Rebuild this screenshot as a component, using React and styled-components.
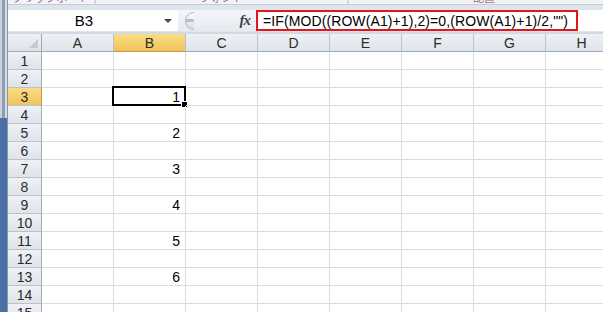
import { Fragment } from "react";
import styled, { createGlobalStyle, css } from "styled-components";

const GlobalStyle = createGlobalStyle`
  html, body {
    margin: 0;
    padding: 0;
    background: #fff;
    overflow: hidden;
  }
  body {
    font-family: "Liberation Sans", "Noto Sans CJK JP", sans-serif;
  }
`;

const Page = styled.div`
  display: flex;
  width: 603px;
  height: 312px;
  overflow: hidden;
`;

const WindowEdge = styled.div`
  width: 8px;
  flex: none;
  box-sizing: border-box;
  border-right: 1px solid #8a97a8;
  background:
    linear-gradient(to right, #c9d0d9 0 2px, #8e9db0 2px 5px, #d5dbe3 5px),
    #c9d0d9;
  background-size: 100% 118px;
  background-repeat: no-repeat;
  background-color: #4a6ea6;
`;

const Main = styled.div`
  flex: 1;
  min-width: 0;
  display: flex;
  flex-direction: column;
  overflow: hidden;
`;

const RibbonStrip = styled.div`
  display: flex;
  height: 5px;
  flex: none;
  overflow: hidden;
  background: #f2f4f7;
  border-bottom: 1px solid #c3ccd7;
  box-sizing: border-box;
`;

const RibbonGroup = styled.div`
  width: ${(p) => p.$w}px;
  flex: none;
  box-sizing: border-box;
  border-right: 2px solid #d3d9e1;
  display: flex;
  justify-content: ${(p) => p.$align || "center"};
  padding: 0 ${(p) => p.$pad || 0}px;
`;

const RibbonLabel = styled.span`
  font-size: 11px;
  line-height: 12px;
  margin-top: -8px;
  color: #9a6a86;
  white-space: nowrap;
`;

const FormulaArea = styled.div`
  flex: none;
  background: #dfe5ed;
  padding: 5px 0 1px;
`;

const FormulaBar = styled.div`
  display: flex;
  align-items: stretch;
  height: 21px;
`;

const NameBox = styled.div`
  width: 170px;
  flex: none;
  background: #fff;
  display: flex;
  align-items: center;
`;

const NameText = styled.span`
  flex: 1;
  text-align: center;
  font-size: 15px;
  color: #000;
`;

const DropArrow = styled.span`
  width: 0;
  height: 0;
  margin: 0 6px 0 4px;
  border-left: 4px solid transparent;
  border-right: 4px solid transparent;
  border-top: 4px solid #444;
`;

const BarTools = styled.div`
  width: 78px;
  flex: none;
  display: flex;
  align-items: center;
  background: linear-gradient(#f3f5f8, #e6eaf0);
`;

const Splitter = styled.svg`
  margin-left: 2px;
  flex: none;
`;

const Fx = styled.span`
  margin-left: auto;
  margin-right: 6px;
  font-family: "Liberation Serif", serif;
  font-style: italic;
  font-weight: bold;
  font-size: 15px;
  color: #444;
  letter-spacing: -1px;
`;

const FormulaInput = styled.div`
  flex: 1;
  background: #fff;
  display: flex;
`;

const Highlight = styled.div`
  width: 322px;
  flex: none;
  box-sizing: border-box;
  border: 2px solid #e4161c;
  display: flex;
  align-items: center;
  padding-left: 5px;
`;

const FormulaText = styled.span`
  font-size: 14px;
  color: #000;
  white-space: nowrap;
  letter-spacing: 0.1px;
`;

const Gap = styled.div`
  height: 2px;
  flex: none;
  background: #d3d9e1;
`;

const Sheet = styled.div`
  display: grid;
  grid-template-columns: 34px repeat(8, 72px);
  grid-auto-rows: 18px;
`;

const headerBase = css`
  box-sizing: border-box;
  display: flex;
  align-items: center;
  justify-content: center;
  font-size: 14px;
  color: #2b2b2b;
  border-right: 1px solid #b9c2cc;
  border-bottom: 1px solid #b9c2cc;
  background: ${(p) =>
    p.$selected
      ? "linear-gradient(#f9dc83, #f1c35e)"
      : "linear-gradient(#eef1f5, #dfe4ea)"};
`;

const Corner = styled.div`
  ${headerBase};
  position: relative;
  border-bottom-color: #9eabb8;
  border-right-color: #9eabb8;
  &::after {
    content: "";
    position: absolute;
    right: 3px;
    bottom: 3px;
    border-left: 9px solid transparent;
    border-bottom: 9px solid #c4cad2;
  }
`;

const ColHeader = styled.div`
  ${headerBase};
  border-bottom-color: ${(p) => (p.$selected ? "#c29a3c" : "#9eabb8")};
`;

const RowHeader = styled.div`
  ${headerBase};
  border-right-color: ${(p) => (p.$selected ? "#c29a3c" : "#9eabb8")};
`;

const Cell = styled.div`
  box-sizing: border-box;
  position: relative;
  border-right: 1px solid #dadcdd;
  border-bottom: 1px solid #dadcdd;
  display: flex;
  align-items: center;
  justify-content: flex-end;
  padding-right: 5px;
  font-size: 14px;
  color: #000;
`;

const ActiveFrame = styled.span`
  position: absolute;
  left: -2px;
  top: -2px;
  right: -1px;
  bottom: -1px;
  border: 2px solid #000;
  pointer-events: none;
`;

const FillHandle = styled.span`
  position: absolute;
  right: -4px;
  bottom: -4px;
  width: 5px;
  height: 5px;
  background: #000;
  border: 1px solid #fff;
`;

const columns = ["A", "B", "C", "D", "E", "F", "G", "H"];
const rows = Array.from({ length: 15 }, (_, i) => i + 1);
const FORMULA = '=IF(MOD((ROW(A1)+1),2)=0,(ROW(A1)+1)/2,"")';

// B3 holds the formula; filled down to B13 it shows 1..6 on every other row
const valueFor = (row, col) => {
  if (col !== "B" || row < 3 || row > 13) return "";
  return (row - 1) % 2 === 0 ? String((row - 1) / 2) : "";
};

const App = () => {
  return (
    <>
      <GlobalStyle />
      <Page>
        <WindowEdge />
        <Main>
          <RibbonStrip>
            <RibbonGroup $w={88}>
              <RibbonLabel>クリップボード</RibbonLabel>
            </RibbonGroup>
            <RibbonGroup $w={253}>
              <RibbonLabel>フォント</RibbonLabel>
            </RibbonGroup>
            <RibbonGroup $w={280} $align="flex-start" $pad={124}>
              <RibbonLabel>配置</RibbonLabel>
            </RibbonGroup>
          </RibbonStrip>
          <FormulaArea>
            <FormulaBar>
              <NameBox>
                <NameText>B3</NameText>
                <DropArrow />
              </NameBox>
              <BarTools>
                <Splitter width="18" height="20" viewBox="0 0 18 20">
                  <defs>
                    <linearGradient id="grip" x1="0" y1="0" x2="0" y2="1">
                      <stop offset="0" stopColor="#ffffff" />
                      <stop offset="1" stopColor="#d7dde5" />
                    </linearGradient>
                  </defs>
                  <path
                    d="M14 1.5 A8.5 8.5 0 1 0 14 18.5"
                    fill="url(#grip)"
                    stroke="#a9b3bf"
                    strokeWidth="1"
                  />
                  <rect x="5" y="8" width="9" height="3" rx="1" fill="#b8c0ca" />
                </Splitter>
                <Fx>fx</Fx>
              </BarTools>
              <FormulaInput>
                <Highlight>
                  <FormulaText>{FORMULA}</FormulaText>
                </Highlight>
              </FormulaInput>
            </FormulaBar>
          </FormulaArea>
          <Gap />
          <Sheet>
            <Corner />
            {columns.map((c) => (
              <ColHeader key={c} $selected={c === "B"}>
                {c}
              </ColHeader>
            ))}
            {rows.map((r) => (
              <Fragment key={r}>
                <RowHeader $selected={r === 3}>{r}</RowHeader>
                {columns.map((c) => (
                  <Cell key={c}>
                    {valueFor(r, c)}
                    {c === "B" && r === 3 && (
                      <ActiveFrame>
                        <FillHandle />
                      </ActiveFrame>
                    )}
                  </Cell>
                ))}
              </Fragment>
            ))}
          </Sheet>
        </Main>
      </Page>
    </>
  );
};

export default App;
